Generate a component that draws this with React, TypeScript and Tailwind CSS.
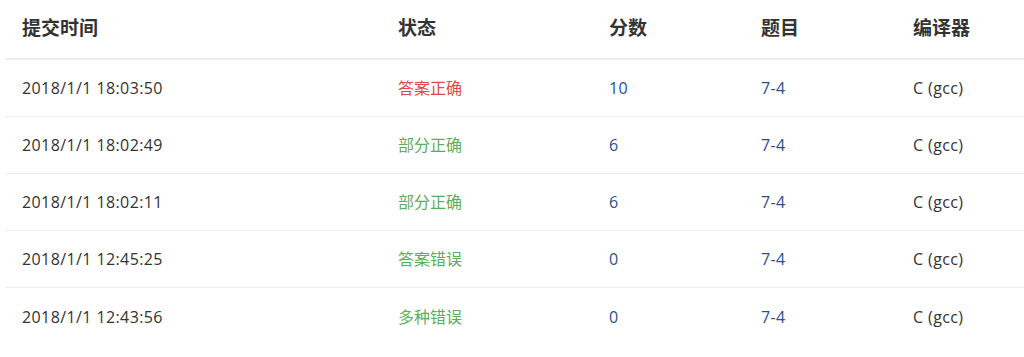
import React from "react";

const rows = [
  { t: "2018/1/1 18:03:50", s: "答案正确", c: "text-[#e0474b]", score: "10" },
  { t: "2018/1/1 18:02:49", s: "部分正确", c: "text-[#5cad5c]", score: "6" },
  { t: "2018/1/1 18:02:11", s: "部分正确", c: "text-[#5cad5c]", score: "6" },
  { t: "2018/1/1 12:45:25", s: "答案错误", c: "text-[#5cad5c]", score: "0" },
  { t: "2018/1/1 12:43:56", s: "多种错误", c: "text-[#5cad5c]", score: "0" },
];

const grid = "grid grid-cols-[376px_211px_152px_152px_1fr] items-center";
const cjk = { fontFamily: '"Noto Sans CJK SC", sans-serif' };

export default function App() {
  return (
    <div
      className="w-[1024px] h-[357px] bg-white pl-[5px] text-[#333]"
      style={{ fontFamily: '"Open Sans", "Noto Sans CJK SC", sans-serif' }}
    >
      <div className={`${grid} h-[60px] border-b-2 border-[#eeeeee] text-[19px] font-bold pb-[3px]`}>
        {["提交时间", "状态", "分数", "题目", "编译器"].map((h) => (
          <div key={h} className="pl-[17px]" style={cjk}>
            {h}
          </div>
        ))}
      </div>
      {rows.map((r, i) => (
        <div
          key={i}
          className={`${grid} h-[57px] text-[16px] tracking-[0.4px] ${i < rows.length - 1 ? "border-b border-[#eeeeee]" : ""}`}
        >
          <div className="pl-[17px]">{r.t}</div>
          <div className={`pl-[17px] tracking-normal ${r.c}`}>{r.s}</div>
          <div className="pl-[17px] text-[#2b4f8a]">{r.score}</div>
          <div className="pl-[17px] text-[#2b4f8a]">7-4</div>
          <div className="pl-[17px]">C (gcc)</div>
        </div>
      ))}
    </div>
  );
}
